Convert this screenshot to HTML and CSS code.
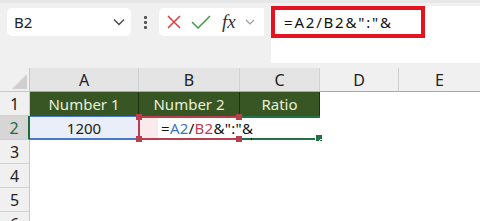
FILE: index.html
```html
<!DOCTYPE html>
<html lang="en">
<head>
    <meta charset="UTF-8">
    <title>Sheet</title>
    <link rel="stylesheet" href="styles.css">
</head>
<body>
    <div class="toolbar">
        <div class="name-box">
            <span>B2</span>
            <svg width="12" height="8" viewBox="0 0 12 8"><path d="M1 1.5 L6 6.5 L11 1.5" fill="none" stroke="#444" stroke-width="1.3"/></svg>
        </div>
        <div class="dots"><i></i><i></i><i></i></div>
        <div class="fx-box">
            <svg width="16" height="16" viewBox="0 0 16 16"><path d="M2 2 L14 14 M14 2 L2 14" stroke="#e03a3a" stroke-width="1.5"/></svg>
            <svg width="20" height="16" viewBox="0 0 20 16"><path d="M1 8 L7 14 L19 2" fill="none" stroke="#3e9a48" stroke-width="1.5"/></svg>
            <span class="fx">fx</span>
            <svg width="10" height="6" viewBox="0 0 10 6"><path d="M1 1 L5 5 L9 1" fill="none" stroke="#999" stroke-width="1.1"/></svg>
        </div>
        <div class="formula">
            <div class="formula-mark">=A2/B2&amp;":"&amp;</div>
        </div>
    </div>

    <div class="sheet">
        <div class="corner"><span class="tri"></span></div>
        <div class="col-head sel">A</div>
        <div class="col-head sel">B</div>
        <div class="col-head sel">C</div>
        <div class="col-head">D</div>
        <div class="col-head last">E</div>

        <div class="row-head">1</div>
        <div class="cell title">Number 1</div>
        <div class="cell title">Number 2</div>
        <div class="cell title">Ratio</div>
        <div class="cell blank"></div>
        <div class="cell blank"></div>

        <div class="row-head active">2</div>
        <div class="cell ref-a">1200</div>
        <div class="cell ref-b">
            <span class="h tl"></span><span class="h tr"></span><span class="h bl"></span><span class="h br"></span>
            <span class="edit">=<b class="blue">A2</b>/<b class="red">B2</b>&amp;":"&amp;</span>
        </div>
        <div class="cell cur"><span class="caret"></span><span class="fill"></span></div>
        <div class="cell blank"></div>
        <div class="cell blank"></div>

        <div class="row-head">3</div>
        <div class="cell blank"></div><div class="cell blank"></div><div class="cell blank"></div><div class="cell blank"></div><div class="cell blank"></div>
        <div class="row-head">4</div>
        <div class="cell blank"></div><div class="cell blank"></div><div class="cell blank"></div><div class="cell blank"></div><div class="cell blank"></div>
        <div class="row-head">5</div>
        <div class="cell blank"></div><div class="cell blank"></div><div class="cell blank"></div><div class="cell blank"></div><div class="cell blank"></div>
        <div class="row-head">6</div>
        <div class="cell blank"></div><div class="cell blank"></div><div class="cell blank"></div><div class="cell blank"></div><div class="cell blank"></div>
    </div>
</body>
</html>
```

FILE: styles.css
```css
body {
    margin: 0;
    width: 480px;
    height: 221px;
    overflow: hidden;
    background: #fff;
    font-family: "Noto Sans", "Liberation Sans", sans-serif;
}

.toolbar {
    height: 68px;
    box-sizing: border-box;
    background: #f0f0f0;
    border-top: 3px solid #e7e7e7;
    display: flex;
    align-items: flex-start;
    padding: 5px 0 0 7px;
}

.name-box {
    width: 124px;
    height: 28px;
    box-sizing: border-box;
    background: #fff;
    border-radius: 5px;
    display: flex;
    align-items: center;
    justify-content: space-between;
    padding: 0 6px 0 7px;
    font-size: 15px;
    color: #222;
}

.dots {
    width: 28px;
    height: 28px;
    display: flex;
    flex-direction: column;
    align-items: center;
    justify-content: center;
    gap: 2px;
}

.dots i {
    width: 3px;
    height: 3px;
    background: #555;
    border-radius: 1px;
}

.fx-box {
    width: 105px;
    height: 28px;
    box-sizing: border-box;
    background: #fff;
    border-radius: 5px 0 0 5px;
    display: flex;
    align-items: center;
    gap: 9px;
    padding-left: 7px;
}

.fx {
    font-family: "Liberation Serif", serif;
    font-style: italic;
    font-size: 19px;
    color: #333;
    margin-left: 2px;
}

.formula {
    flex: 1;
    height: 57px;
    margin: -2px 0 0 7px;
    background: #fff;
}

.formula-mark {
    width: 154px;
    height: 32px;
    box-sizing: border-box;
    border: 4px solid #e3141f;
    padding-left: 9px;
    font-size: 15px;
    letter-spacing: 1.8px;
    line-height: 24px;
    color: #111;
}

.sheet {
    display: grid;
    grid-template-columns: 30px 109px 101px 80px 79px 81px;
    grid-template-rows: 24px 24px 24px 24px 24px 24px 24px;
    font-size: 15px;
}

.corner {
    background: #f0f0f0;
    border-right: 1px solid #c8c8c8;
    border-bottom: 1px solid #c8c8c8;
    position: relative;
}

.tri {
    position: absolute;
    right: 2px;
    bottom: 2px;
    border-left: 15px solid transparent;
    border-bottom: 15px solid #cfcfcf;
}

.col-head {
    background: #f0f0f0;
    border-right: 1px solid #d0d0d0;
    border-bottom: 1px solid #a8a8a8;
    display: flex;
    align-items: center;
    justify-content: center;
    font-size: 16px;
    color: #222;
}

.col-head.sel {
    background: #e4e4e4;
}

.col-head.last {
    border-right: none;
}

.row-head {
    background: #f0f0f0;
    border-right: 1px solid #c8c8c8;
    border-bottom: 1px solid #d0d0d0;
    display: flex;
    align-items: center;
    justify-content: center;
    font-size: 16px;
    color: #222;
}

.row-head.active {
    background: #d6d6d6;
    color: #1e6b3c;
    border-right: 2px solid #1e6b3c;
}

.cell {
    border-right: 1px solid #e0e0e0;
    border-bottom: 1px solid #e0e0e0;
    display: flex;
    align-items: center;
    justify-content: center;
    position: relative;
}

.cell.blank {
    border-color: #fff;
}

.cell.title {
    background: #375623;
    color: #e8f0dc;
    border-right: 1px solid #1e3012;
    border-bottom: 1px solid #375623;
}

.ref-a {
    background: #e9eef8;
    border-top: 1px solid #4a78c8;
    border-bottom: 2px solid #4a78c8;
    color: #222;
}

.ref-b {
    background: #fbeaec;
    border: 2px solid #b8404e;
    justify-content: flex-start;
    padding-left: 18px;
    margin-left: -1px;
}

.edit {
    background: #fff;
    white-space: nowrap;
    color: #111;
    font-size: 15px;
    letter-spacing: 0.3px;
    position: relative;
    z-index: 2;
    padding-left: 3px;
}

.edit b {
    font-weight: normal;
}

.blue { color: #4472c4; }
.red { color: #c0404f; }

.h {
    position: absolute;
    width: 6px;
    height: 6px;
    background: #b8404e;
    z-index: 3;
}

.tl { left: -4px; top: -4px; }
.tr { right: -4px; top: -4px; }
.bl { left: -4px; bottom: -4px; }
.br { right: -4px; bottom: -4px; }

.cur {
    border-top: 2px solid #217346;
    border-bottom: 2px solid #217346;
    border-right: none;
}

.caret {
    position: absolute;
    left: 11px;
    top: 2px;
    width: 1px;
    height: 20px;
    background: #111;
}

.fill {
    position: absolute;
    right: -3px;
    bottom: -4px;
    width: 6px;
    height: 6px;
    background: #217346;
    border: 1px solid #fff;
}
```
